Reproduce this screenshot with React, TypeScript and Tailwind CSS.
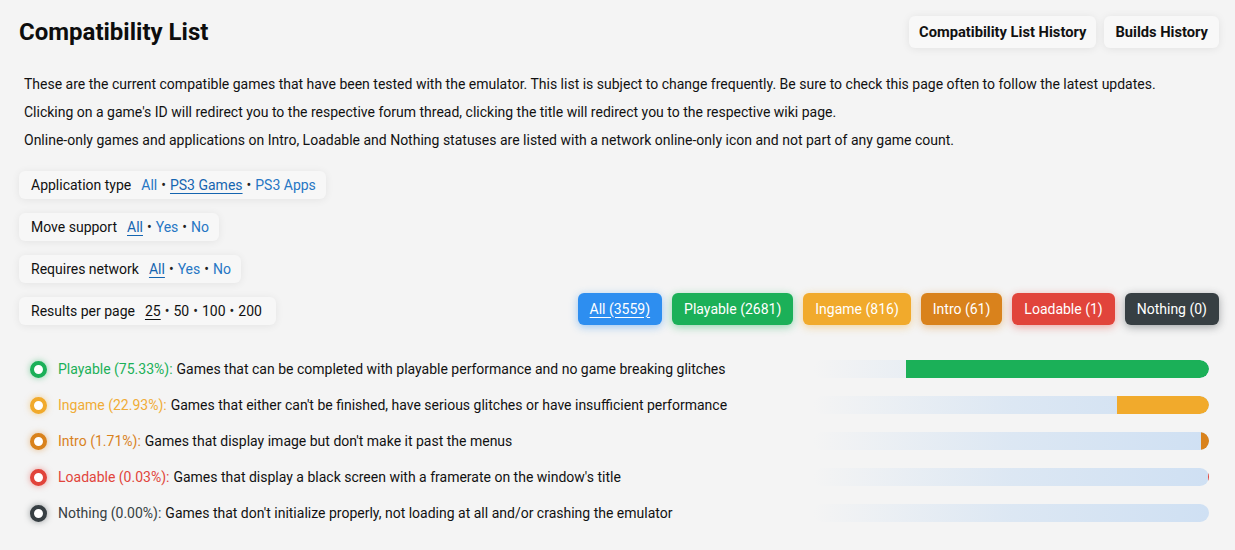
import React from "react";

const filters = [
  {
    label: "Application type",
    items: [
      { t: "All", active: false },
      { t: "PS3 Games", active: true },
      { t: "PS3 Apps", active: false },
    ],
  },
  {
    label: "Move support",
    items: [
      { t: "All", active: true },
      { t: "Yes", active: false },
      { t: "No", active: false },
    ],
  },
  {
    label: "Requires network",
    items: [
      { t: "All", active: true },
      { t: "Yes", active: false },
      { t: "No", active: false },
    ],
  },
];

const statusButtons = [
  { t: "All (3559)", cls: "bg-[#2d8ef0] shadow-[0_2px_8px_rgba(45,142,240,0.45)]", u: true },
  { t: "Playable (2681)", cls: "bg-[#1bb058] shadow-[0_2px_8px_rgba(27,176,88,0.45)]", u: false },
  { t: "Ingame (816)", cls: "bg-[#f1aa2c] shadow-[0_2px_8px_rgba(241,170,44,0.45)]", u: false },
  { t: "Intro (61)", cls: "bg-[#d9821c] shadow-[0_2px_8px_rgba(217,130,28,0.45)]", u: false },
  { t: "Loadable (1)", cls: "bg-[#e1443b] shadow-[0_2px_8px_rgba(225,68,59,0.45)]", u: false },
  { t: "Nothing (0)", cls: "bg-[#373f43] shadow-[0_2px_8px_rgba(55,63,67,0.45)]", u: false },
];

const legend = [
  {
    name: "Playable (75.33%)",
    desc: "Games that can be completed with playable performance and no game breaking glitches",
    text: "text-[#1bb058]",
    ring: "border-[#1bb058] shadow-[0_0_6px_rgba(27,176,88,0.5)]",
    fill: "bg-[#1bb058]",
    pct: 76.5,
  },
  {
    name: "Ingame (22.93%)",
    desc: "Games that either can't be finished, have serious glitches or have insufficient performance",
    text: "text-[#f0ac36]",
    ring: "border-[#f1aa2c] shadow-[0_0_6px_rgba(241,170,44,0.5)]",
    fill: "bg-[#f1aa2c]",
    pct: 23.3,
  },
  {
    name: "Intro (1.71%)",
    desc: "Games that display image but don't make it past the menus",
    text: "text-[#d9821c]",
    ring: "border-[#d9821c] shadow-[0_0_6px_rgba(217,130,28,0.5)]",
    fill: "bg-[#d9821c]",
    pct: 1.9,
  },
  {
    name: "Loadable (0.03%)",
    desc: "Games that display a black screen with a framerate on the window's title",
    text: "text-[#e1443b]",
    ring: "border-[#e1443b] shadow-[0_0_6px_rgba(225,68,59,0.5)]",
    fill: "bg-[#e1443b]",
    pct: 0.3,
  },
  {
    name: "Nothing (0.00%)",
    desc: "Games that don't initialize properly, not loading at all and/or crashing the emulator",
    text: "text-[#373f43]",
    ring: "border-[#373f43] shadow-[0_0_6px_rgba(55,63,67,0.5)]",
    fill: "bg-[#373f43]",
    pct: 0,
  },
];

const Dot = () => <span className="mx-[4px] text-[#222]">•</span>;

export default function App() {
  return (
    <div
      className="w-full h-[550px] bg-[#f4f4f4] text-[#111] pl-[19px] pr-[16px] pt-[16px] overflow-hidden"
      style={{ fontFamily: "Roboto, 'Noto Sans', sans-serif" }}
    >
      {/* Header */}
      <div className="flex items-center justify-between h-[32px]">
        <h1 className="text-[24px] font-bold leading-none text-[#0d0d0d] -mt-[1px]">Compatibility List</h1>
        <div className="flex gap-[8px]">
          <button className="h-[32px] px-[10px] rounded-[6px] bg-[#f8f8f8] shadow-[0_1px_8px_rgba(0,0,0,0.08)] text-[14.7px] font-bold text-[#111]">
            Compatibility List History
          </button>
          <button className="h-[32px] px-[11px] rounded-[6px] bg-[#f8f8f8] shadow-[0_1px_8px_rgba(0,0,0,0.08)] text-[14.7px] font-bold text-[#111]">
            Builds History
          </button>
        </div>
      </div>

      {/* Intro text */}
      <div className="mt-[22px] ml-[5px] text-[14px] leading-[28px] text-[#111]">
        <p>
          These are the current compatible games that have been tested with the emulator. This list is subject to change frequently. Be sure to check this page often to follow the latest updates.
        </p>
        <p>Clicking on a game's ID will redirect you to the respective forum thread, clicking the title will redirect you to the respective wiki page.</p>
        <p>Online-only games and applications on Intro, Loadable and Nothing statuses are listed with a network online-only icon and not part of any game count.</p>
      </div>

      {/* Filters */}
      <div className="mt-[17px] flex flex-col gap-[14px]">
        {filters.map((f) => (
          <div key={f.label} className="flex">
            <div className="h-[28px] flex items-center pl-[12px] pr-[10px] rounded-[6px] bg-[#f7f7f7] shadow-[0_1px_8px_rgba(0,0,0,0.07)] text-[14px]">
              <span className="mr-[10px] text-[#111]">{f.label}</span>
              {f.items.map((it, i) => (
                <React.Fragment key={it.t}>
                  {i > 0 && <Dot />}
                  <span className={it.active ? "underline underline-offset-[3px] text-[#1565b0]" : "text-[#2676c4]"}>{it.t}</span>
                </React.Fragment>
              ))}
            </div>
          </div>
        ))}
        <div className="flex items-end justify-between -mt-[4px]">
          <div className="h-[28px] flex items-center pl-[12px] pr-[14px] rounded-[6px] bg-[#f7f7f7] shadow-[0_1px_8px_rgba(0,0,0,0.07)] text-[14px] text-[#111]">
            <span className="mr-[10px]">Results per page</span>
            <span className="underline underline-offset-[3px]">25</span>
            <Dot />
            <span>50</span>
            <Dot />
            <span>100</span>
            <Dot />
            <span>200</span>
          </div>
          <div className="flex gap-[10px]">
            {statusButtons.map((b) => (
              <div
                key={b.t}
                className={`h-[32px] px-[12px] rounded-[6px] flex items-center text-[14px] text-white ${b.cls} ${b.u ? "underline underline-offset-[3px]" : ""}`}
              >
                {b.t}
              </div>
            ))}
          </div>
        </div>
      </div>

      {/* Legend */}
      <div className="mt-[26px] pl-[11px] pr-[10px] flex flex-col">
        {legend.map((l) => (
          <div key={l.name} className="h-[36px] flex items-center justify-between">
            <div className="flex items-center text-[14px]">
              <span className={`w-[17px] h-[17px] rounded-full border-[4px] bg-white ${l.ring}`} />
              <span className={`ml-[11px] ${l.text}`}>{l.name}:</span>
              <span className="ml-[4px] text-[#111]">{l.desc}</span>
            </div>
            <div className="w-[396px] h-[18px] rounded-full overflow-hidden bg-gradient-to-r from-[rgba(207,224,243,0)] via-[rgba(216,229,243,0.85)] to-[#cfe0f3] flex justify-end">
              <div className={`h-full ${l.fill} rounded-r-full`} style={{ width: `${l.pct}%` }} />
            </div>
          </div>
        ))}
      </div>
    </div>
  );
}
